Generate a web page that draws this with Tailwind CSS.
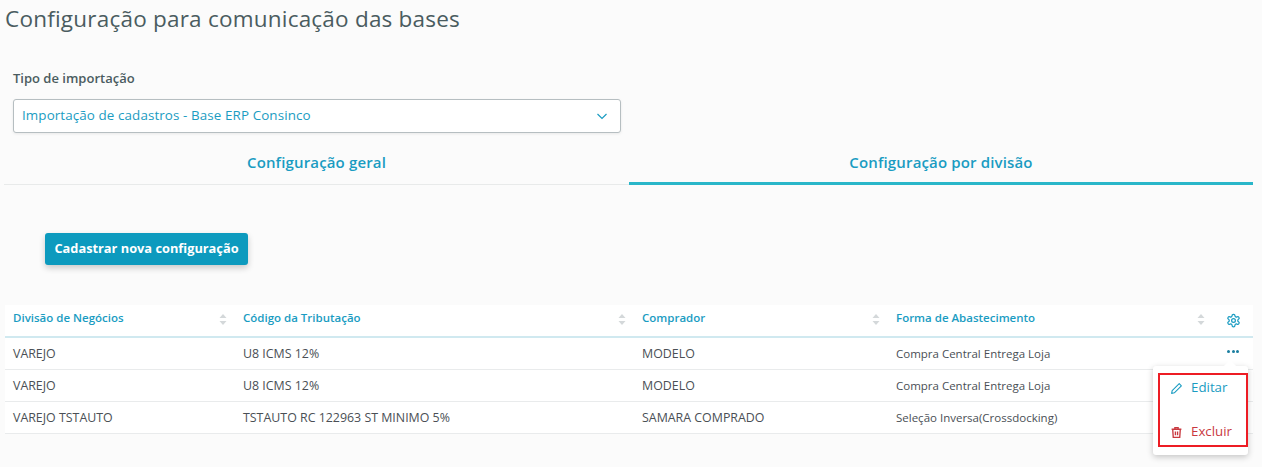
<!DOCTYPE html>
<html lang="pt-br">
<head>
<meta charset="UTF-8">
<script src="https://cdn.jsdelivr.net/npm/@tailwindcss/browser@4"></script>
<title>Configuração</title>
</head>
<body class="bg-[#fbfbfb] font-['Open_Sans',sans-serif] overflow-hidden">
<div class="relative h-[467px] w-[1262px]">
    <h1 class="pl-[5px] pt-[4px] h-[69px] text-[22.5px] leading-[30px] text-[#4a5c60] tracking-[0.22px]">Configuração para comunicação das bases</h1>

    <!-- Tipo de importação -->
    <div class="pl-[13px] w-[621px]">
        <label class="block h-[30px] text-[13px] leading-[18px] font-semibold text-[#4a5c60]">Tipo de importação</label>
        <div class="flex items-center justify-between h-[34px] bg-white border border-[#b6bec1] rounded-[3px] pl-2 pr-[12px] shadow-[0_1px_3px_rgba(0,0,0,0.08)]">
            <span class="text-[13.4px] text-[#1a9cc2] tracking-[0.1px] mb-[2px]">Importação de cadastros - Base ERP Consinco</span>
            <svg class="w-3 h-3 text-[#1a9cc2]" viewBox="0 0 12 12" fill="none" stroke="currentColor" stroke-width="1.2"><path d="M1.5 4l4.5 4.500L10.500 4"/></svg>
        </div>
    </div>

    <!-- Abas -->
    <div class="flex pl-[4px] w-[1253px] h-[52px]">
        <div class="w-[625px] flex justify-center pt-[18px] border-b border-[#e8eaea] h-[52px]">
            <span class="text-[15px] leading-[22px] font-semibold text-[#1a9cc2] tracking-[0.15px]">Configuração geral</span>
        </div>
        <div class="flex-1 flex justify-center pt-[18px] border-b-[3px] border-[#29b6c9] h-[52px]">
            <span class="text-[15px] leading-[22px] font-semibold text-[#1a9cc2] tracking-[0.15px]">Configuração por divisão</span>
        </div>
    </div>

    <div class="pl-[45px] pt-[48px] h-[120px]">
        <button class="h-[32px] w-[203px] bg-[#0c9abe] text-white text-[12.8px] font-bold rounded-[3px] shadow-[0_3px_6px_rgba(0,0,0,0.2)]">Cadastrar nova configuração</button>
    </div>

    <!-- Tabela -->
    <div class="ml-[5px] w-[1248px] bg-white text-[11.5px] text-[#4a4f55]">
        <div class="grid grid-cols-[230px_399px_254px_325px_40px] h-[33px] border-b-2 border-[#d0e9f0] items-center text-[#1a9cc2] font-semibold">
            <div class="flex items-center justify-between pl-2 pr-[8px] pb-[3px]"><span class="mb-[2px]">Divisão de Negócios</span>
                <svg class="w-[8px] h-[11px]" viewBox="0 0 8 11" fill="#d4d8da"><path d="M4 0l3.500 4h-7zM4 11l3.500-4h-7z"/></svg></div>
            <div class="flex items-center justify-between pl-2 pr-[8px] pb-[3px]"><span class="mb-[2px]">Código da Tributação</span>
                <svg class="w-[8px] h-[11px]" viewBox="0 0 8 11" fill="#d4d8da"><path d="M4 0l3.500 4h-7zM4 11l3.500-4h-7z"/></svg></div>
            <div class="flex items-center justify-between pl-2 pr-[8px] pb-[3px]"><span class="mb-[2px]">Comprador</span>
                <svg class="w-[8px] h-[11px]" viewBox="0 0 8 11" fill="#d4d8da"><path d="M4 0l3.500 4h-7zM4 11l3.500-4h-7z"/></svg></div>
            <div class="flex items-center justify-between pl-2 pr-[8px] pb-[3px]"><span class="mb-[2px]">Forma de Abastecimento</span>
                <svg class="w-[8px] h-[11px]" viewBox="0 0 8 11" fill="#d4d8da"><path d="M4 0l3.500 4h-7zM4 11l3.500-4h-7z"/></svg></div>
            <div class="flex justify-center">
                <svg class="w-[15px] h-[15px] text-[#1a9cc2]" viewBox="0 0 24 24" fill="none" stroke="currentColor" stroke-width="2" stroke-linecap="round" stroke-linejoin="round"><path d="M12.220 2h-.44a2 2 0 0 0-2 2v.180a2 2 0 0 1-1 1.730l-.430.250a2 2 0 0 1-2 0l-.150-.080a2 2 0 0 0-2.730.730l-.220.380a2 2 0 0 0 .730 2.730l.150.100a2 2 0 0 1 1 1.720v.510a2 2 0 0 1-1 1.740l-.150.090a2 2 0 0 0-.730 2.730l.220.380a2 2 0 0 0 2.730.730l.150-.080a2 2 0 0 1 2 0l.430.250a2 2 0 0 1 1 1.730V20a2 2 0 0 0 2 2h.440a2 2 0 0 0 2-2v-.180a2 2 0 0 1 1-1.730l.430-.250a2 2 0 0 1 2 0l.150.080a2 2 0 0 0 2.730-.730l.220-.390a2 2 0 0 0-.730-2.730l-.150-.080a2 2 0 0 1-1-1.740v-.500a2 2 0 0 1 1-1.740l.150-.090a2 2 0 0 0 .730-2.730l-.220-.380a2 2 0 0 0-2.730-.730l-.150.080a2 2 0 0 1-2 0l-.430-.250a2 2 0 0 1-1-1.730V4a2 2 0 0 0-2-2z"/><circle cx="12" cy="12" r="3"/></svg>
            </div>
        </div>
        <div class="grid grid-cols-[230px_399px_254px_325px_40px] h-[32px] border-b border-[#e9ebec] items-center">
            <div class="pl-2 pt-[1px] text-[12.4px]">VAREJO</div><div class="pl-2 pt-[1px] text-[12.4px]">U8 ICMS 12%</div><div class="pl-2 pt-[1px] text-[12.4px]">MODELO</div><div class="pl-2">Compra Central Entrega Loja</div>
            <div class="flex justify-center gap-[1.500px] pb-[4px]"><span class="w-[3px] h-[3px] rounded-full bg-[#1a7ea0]"></span><span class="w-[3px] h-[3px] rounded-full bg-[#1a7ea0]"></span><span class="w-[3px] h-[3px] rounded-full bg-[#1a7ea0]"></span></div>
        </div>
        <div class="grid grid-cols-[230px_399px_254px_325px_40px] h-[32px] border-b border-[#e9ebec] items-center">
            <div class="pl-2 pt-[1px] text-[12.4px]">VAREJO</div><div class="pl-2 pt-[1px] text-[12.4px]">U8 ICMS 12%</div><div class="pl-2 pt-[1px] text-[12.4px]">MODELO</div><div class="pl-2">Compra Central Entrega Loja</div><div></div>
        </div>
        <div class="grid grid-cols-[230px_399px_254px_325px_40px] h-[32px] border-b border-[#e9ebec] items-center">
            <div class="pl-2 pt-[1px] text-[12.4px]">VAREJO TSTAUTO</div><div class="pl-2 pt-[1px] text-[12.4px]">TSTAUTO RC 122963 ST MINIMO 5%</div><div class="pl-2 pt-[1px] text-[12.4px]">SAMARA COMPRADO</div><div class="pl-2">Seleção Inversa(Crossdocking)</div><div></div>
        </div>
    </div>

    <!-- Menu de ações -->
    <div class="absolute left-[1153px] top-[366px] w-[95px] h-[89px] bg-white rounded-[3px] shadow-[0_2px_6px_rgba(0,0,0,0.22)]">
        <div class="absolute left-[72px] -top-[4px] w-[10px] h-[10px] bg-white rotate-45"></div>
        <div class="absolute left-[5px] top-[7px] w-[90px] h-[74px] border-2 border-[#ed1c24] flex flex-col text-[13.3px]">
            <div class="flex items-center gap-[8px] pl-[10px] h-[26px] text-[#1a9cc2]">
                <svg class="w-[13px] h-[13px]" viewBox="0 0 24 24" fill="none" stroke="currentColor" stroke-width="2" stroke-linejoin="round"><path d="M17 3l4 4L8 20l-5 1 1-5z"/></svg>
                <span>Editar</span>
            </div>
            <div class="flex items-center gap-[8px] pl-[10px] h-[26px] mt-[18px] text-[#c9383f]">
                <svg class="w-[13px] h-[13px]" viewBox="0 0 24 24" fill="none" stroke="currentColor" stroke-width="2.500"><path d="M3 6h18M9 6V3h6v3M5 6l1 15h12l1-15M10 10v7M14 10v7"/></svg>
                <span>Excluir</span>
            </div>
        </div>
    </div>
</div>
</body>
</html>
